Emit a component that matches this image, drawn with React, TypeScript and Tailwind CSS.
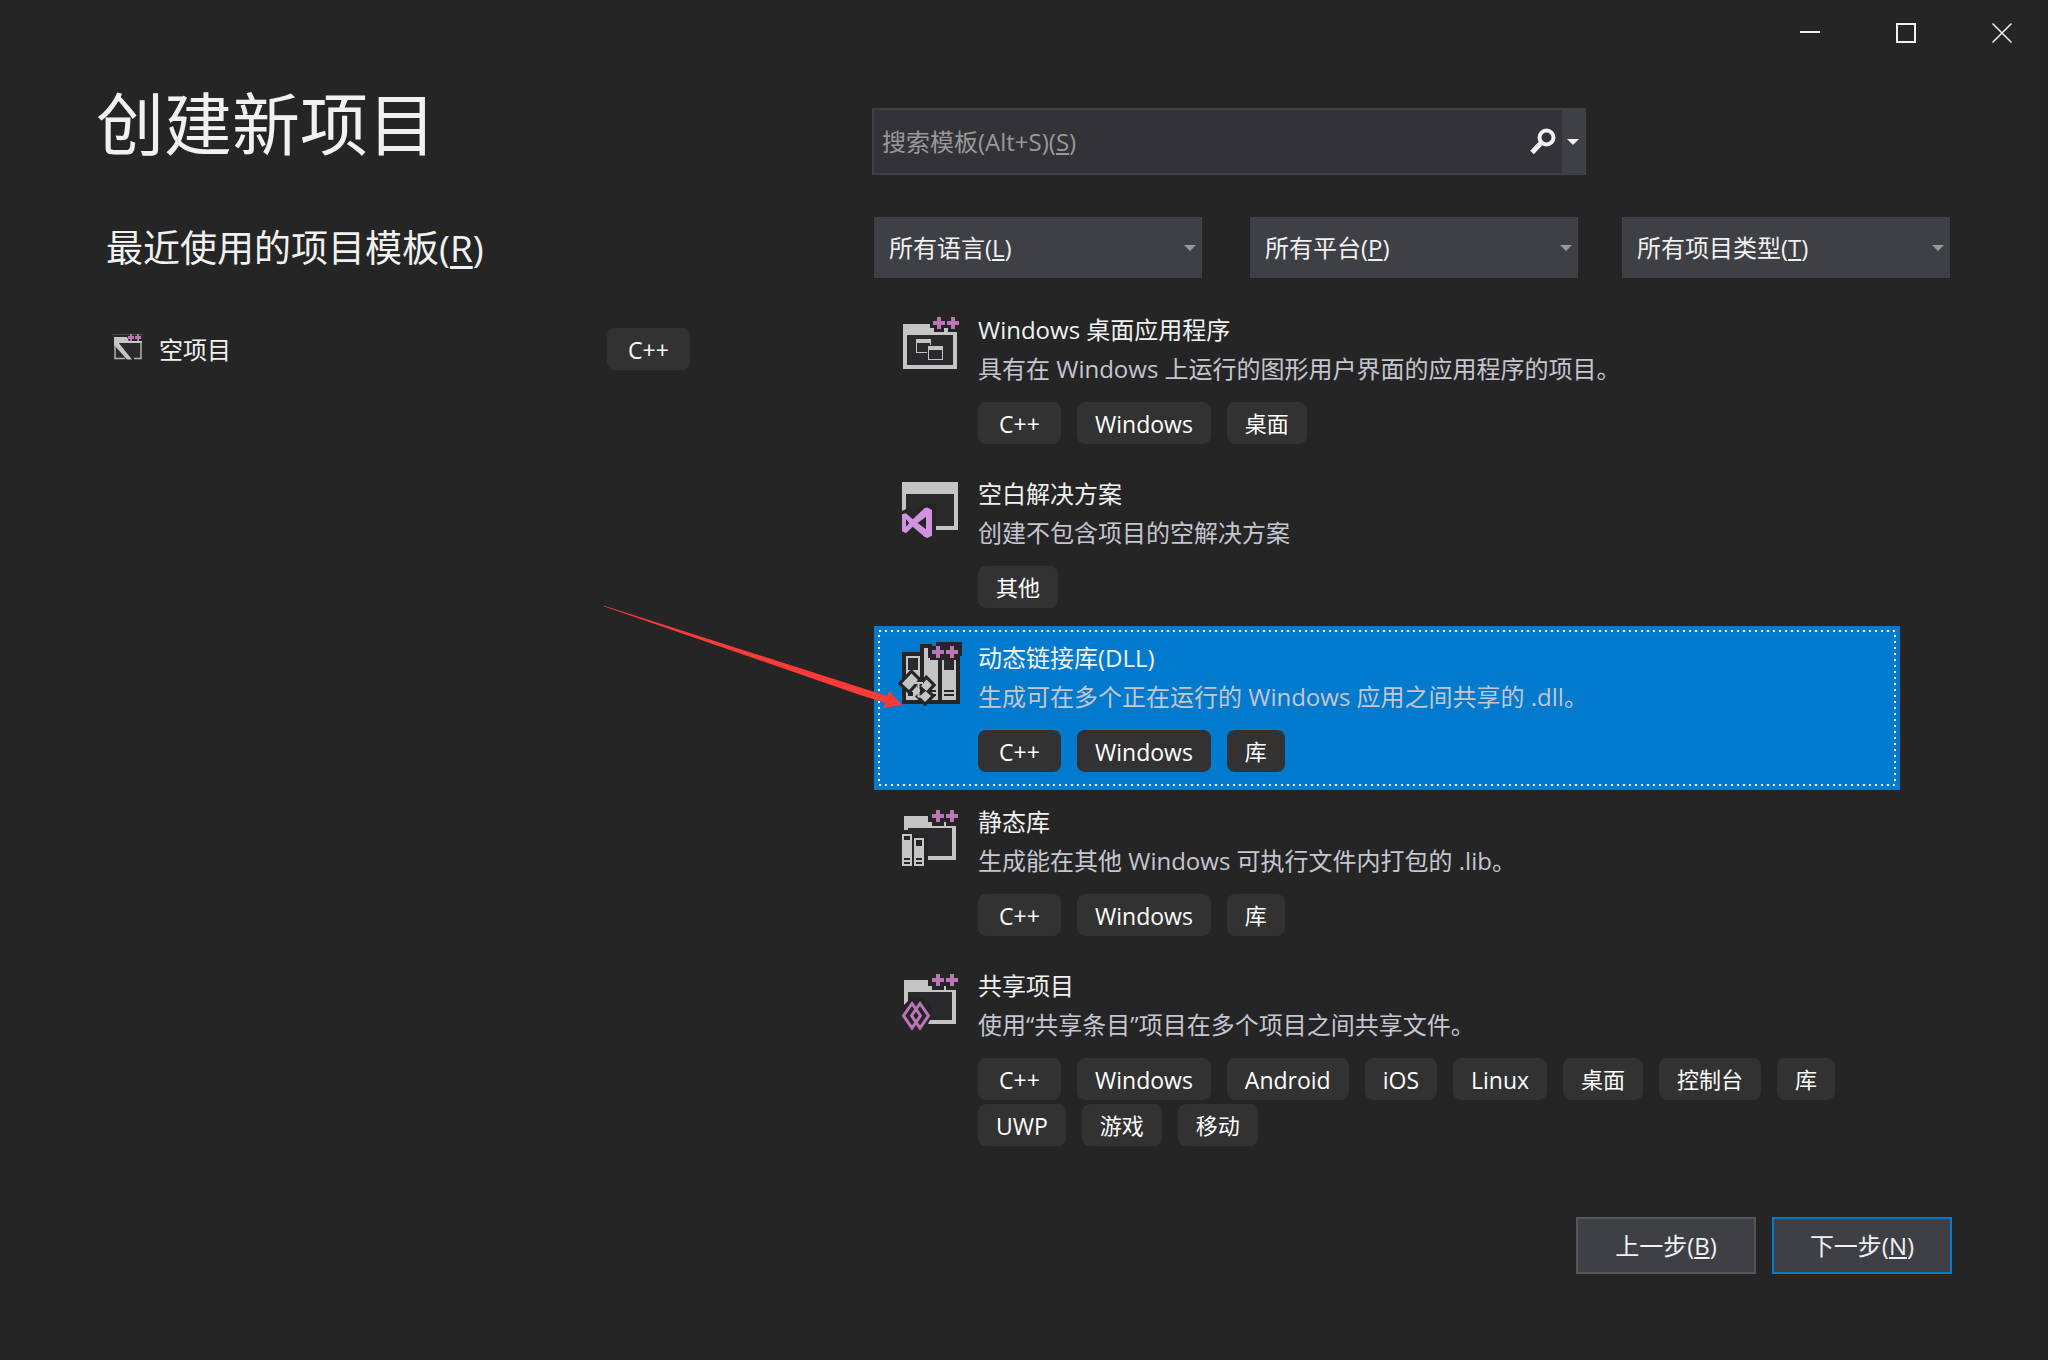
import { useState } from 'react';
import type { ReactNode } from 'react';
import clsx from 'clsx';

interface Template {
  id: string;
  title: string;
  description: string;
  tags: string[];
  icon: ReactNode;
}

interface FilterProps {
  id: string;
  text: string;
  accessKey: string;
  options: string[];
  className?: string;
}

function PlusPlus({ x, y }: { x: number; y: number }) {
  return (
    <g fill="#bb76b8">
      <path d={`M${x + 4} ${y}h4v4h4v4h-4v4h-4v-4h-4v-4h4z`} />
      <path d={`M${x + 18} ${y}h4v4h4v4h-4v4h-4v-4h-4v-4h4z`} />
    </g>
  );
}

function DesktopAppIcon() {
  return (
    <svg viewBox="0 0 64 64" className="size-16" aria-hidden="true">
      <path fill="#c5c5c5" d="M5 10h27v4h4v4h10v-4h4v4h9v37H5z" />
      <path fill="#2a2a2d" d="M9 21h46v30H9z" />
      <path fill="#c5c5c5" d="M18 25h15v14H18z" />
      <path fill="#2a2a2d" d="M19 29h13v9H19z" />
      <path fill="#2a2a2d" d="M29 31h17v16H29z" />
      <path fill="#c5c5c5" d="M30 32h15v14H30z" />
      <path fill="#2a2a2d" d="M31 36h13v9H31z" />
      <PlusPlus x={35} y={3} />
    </svg>
  );
}

function BlankSolutionIcon() {
  return (
    <svg viewBox="0 0 64 64" className="size-16" aria-hidden="true">
      <path fill="#2a2a2d" d="M8 16h48v32H38V26L28 25 16 35 8 31z" />
      <path fill="#c5c5c5" d="M4 4h56v48H38v-4h18V16H8v15l-4 2z" />
      <path
        fill="#d292e0"
        fillRule="evenodd"
        d="M4 36.3l4-1 6.7 6L26.7 30l2.6-.5L34 32v25.700l-4.700 2.300-2.600-1L14.700 48.700 8 55.300l-4-2zM8 41.300v7.400l3.300-3.700zM28 38.700v12.600L19.700 45z"
      />
    </svg>
  );
}

function DllIcon() {
  return (
    <svg viewBox="0 0 64 64" className="size-16" aria-hidden="true">
      <path fill="#252526" d="M4 10h18V2h12v2h4V0h26v14h-2v48H4z" />
      <path fill="#c5c5c5" d="M8 14h14v44H8zM26 6h14v52H26zM44 18h14v40H44z" />
      <path fill="#2a2a2d" d="M10 16h10v12H10zM46 18h10v10H46z" />
      <path fill="#252526" d="M30 6h12v12H32v-2h-2zM42 6h4v12h-4z" />
      <path fill="#252526" d="M46 48h10v2H46zM46 52h10v2H46zM32 48h6v2h-6zM32 52h6v2h-6zM10 50h5v4h-5z" />
      <g fill="#252526" stroke="#252526" strokeWidth="7">
        <path d="M4.500 41.500L13.500 32l6 6-8.500 9.500z" />
        <path d="M28.500 38l5 5-5 5.500-5-4z" />
        <path d="M27.500 49.500l5 4.500-5.500 5.500-5-5z" />
      </g>
      <g fill="#c5c5c5">
        <path d="M4 41.500L13.500 31.500l6.500 6.500-9 10z" />
        <path d="M28.500 37.500l5.500 5.500-5.500 6-5.500-5z" />
        <path d="M27.500 49l5.500 5-6 6-5.500-5.500z" />
      </g>
      <path d="M16 41h9M20.500 41v13.500H24" fill="none" stroke="#c5c5c5" strokeWidth="2" />
      <PlusPlus x={34} y={4} />
    </svg>
  );
}

function StaticLibIcon() {
  return (
    <svg viewBox="0 0 64 64" className="size-16" aria-hidden="true">
      <path fill="#2a2a2d" d="M10 22h44v28H30V28H10z" />
      <path fill="#c5c5c5" d="M6 10h24v6h4v4h12v-4h2v4h10v34H30v-4h24V22H10v2H6z" />
      <path fill="#c5c5c5" d="M4 28h10v32H4zM16 32h10v28H16z" />
      <path
        fill="#252526"
        d="M6 30h6v4H6zM18 34h6v6h-6zM6 52h6v2H6zM6 56h6v2H6zM18 52h6v2h-6zM18 56h6v2h-6z"
      />
      <PlusPlus x={34} y={4} />
    </svg>
  );
}

function SharedProjectIcon() {
  return (
    <svg viewBox="0 0 64 64" className="size-16" aria-hidden="true">
      <path fill="#2a2a2d" d="M10 22h44v28H34V38l-8-9H12l-2 3z" />
      <path fill="#c5c5c5" d="M6 10h24v6h4v4h12v-4h2v4h10v34H30v-4h24V22H10v12l-4 3z" />
      <path fill="#252526" d="M13 28h12l10 16-6 12H18L4 46V37z" />
      <g fill="none" stroke="#bb76b8" strokeWidth="3">
        <path d="M14 33.500L5.500 45.700 14 58l8.500-12.300z" />
        <path d="M22 33.500l-8.500 12.200L22 58l8.500-12.300z" />
      </g>
      <PlusPlus x={34} y={4} />
    </svg>
  );
}

function EmptyProjectIcon() {
  return (
    <svg viewBox="0 0 32 32" className="size-8" aria-hidden="true">
      <path stroke="#4a4a4a" d="M0 1.500h31" />
      <path fill="#2a2a2d" d="M3 9h26v16H3z" />
      <path fill="#c5c5c5" d="M2 4h13l2 4h13v2H2z" />
      <path fill="none" stroke="#b0b0b0" strokeWidth="1.500" d="M3 9v16.500h10M22 25.500h7V9" />
      <path fill="#c5c5c5" d="M2 9h4l14 17.500h-5L2 12z" />
      <path fill="#252526" d="M15 2h15v6H17z" />
      <path fill="#bb76b8" d="M18 1h2v2h2v3h-2v2h-2V6h-2V3h2zM25 1h2v2h2v3h-2v2h-2V6h-2V3h2z" />
    </svg>
  );
}

const templates: Template[] = [
  {
    id: 'desktop',
    title: 'Windows 桌面应用程序',
    description: '具有在 Windows 上运行的图形用户界面的应用程序的项目。',
    tags: ['C++', 'Windows', '桌面'],
    icon: <DesktopAppIcon />,
  },
  {
    id: 'blank',
    title: '空白解决方案',
    description: '创建不包含项目的空解决方案',
    tags: ['其他'],
    icon: <BlankSolutionIcon />,
  },
  {
    id: 'dll',
    title: '动态链接库(DLL)',
    description: '生成可在多个正在运行的 Windows 应用之间共享的 .dll。',
    tags: ['C++', 'Windows', '库'],
    icon: <DllIcon />,
  },
  {
    id: 'lib',
    title: '静态库',
    description: '生成能在其他 Windows 可执行文件内打包的 .lib。',
    tags: ['C++', 'Windows', '库'],
    icon: <StaticLibIcon />,
  },
  {
    id: 'shared',
    title: '共享项目',
    description: '使用“共享条目”项目在多个项目之间共享文件。',
    tags: ['C++', 'Windows', 'Android', 'iOS', 'Linux', '桌面', '控制台', '库', 'UWP', '游戏', '移动'],
    icon: <SharedProjectIcon />,
  },
];

function Tag({ label }: { label: string }) {
  // Latin labels are set slightly larger to balance with the Chinese ones
  const latin = /^[A-Za-z+]+$/.test(label);
  return (
    <span
      className={clsx(
        'flex h-[42px] items-center justify-center rounded-lg bg-[#323233] px-[18px] pt-[2px] text-white',
        latin ? 'text-[23px]' : 'text-[22px]',
        label === 'C++' && 'min-w-[83px]',
      )}
    >
      {label}
    </span>
  );
}

function Filter({ id, text, accessKey, options, className }: FilterProps) {
  return (
    <div className={clsx('relative h-[61px] flex-1 bg-[#3f3f46]', className)}>
      <select id={id} className="size-full appearance-none bg-transparent px-4 text-transparent outline-none">
        {options.map((option) => (
          <option key={option} className="bg-[#3f3f46] text-white">{option}</option>
        ))}
      </select>
      <label htmlFor={id} className="pointer-events-none absolute inset-0 flex items-center justify-between pr-[6px] pl-[15px]">
        <span>{text}(<u className="underline-offset-2">{accessKey}</u>)</span>
        <svg viewBox="0 0 12 6" className="h-[6px] w-3" aria-hidden="true">
          <path fill="#999999" d="M0 0h12L6 6z" />
        </svg>
      </label>
    </div>
  );
}

export default function App() {
  const [selected, setSelected] = useState('dll');
  const [query, setQuery] = useState('');

  return (
    <div className="relative min-h-screen bg-[#252526] pb-[86px] font-['Open_Sans','Noto_Sans_CJK_SC',sans-serif] text-2xl text-[#f1f1f1]">
      {/* Window buttons */}
      <header className="flex h-[66px] justify-end gap-1">
        <button aria-label="最小化" className="flex w-[92px] items-center justify-center">
          <svg viewBox="0 0 20 20" className="size-5" aria-hidden="true">
            <path fill="#f1f1f1" d="M0 8h20v2H0z" />
          </svg>
        </button>
        <button aria-label="最大化" className="flex w-[92px] items-center justify-center">
          <svg viewBox="0 0 20 20" className="size-5" aria-hidden="true">
            <path fill="none" stroke="#f1f1f1" strokeWidth="2" d="M1 1h18v18H1z" />
          </svg>
        </button>
        <button aria-label="关闭" className="flex w-[92px] items-center justify-center">
          <svg viewBox="0 0 20 20" className="size-5" aria-hidden="true">
            <path fill="none" stroke="#f1f1f1" strokeWidth="1.500" d="M.5.5l19 19M19.500.5l-19 19" />
          </svg>
        </button>
      </header>

      <main className="grid grid-cols-[minmax(0,872fr)_minmax(0,1176fr)]">
        {/* Recent templates */}
        <section className="pl-24">
          <h1 className="mt-[14px] text-[68px] leading-[88px]">创建新项目</h1>
          <h2 className="mt-14 pl-[10px] text-[37px] leading-[48px]">
            最近使用的项目模板(<u className="underline-offset-4">R</u>)
          </h2>
          <div className="mt-14 mr-[182px] flex h-[42px] items-center pl-4">
            <EmptyProjectIcon />
            <span className="ml-[15px] flex-1 pt-[2px]">空项目</span>
            <Tag label="C++" />
          </div>
        </section>

        <section className="pt-[42px] pr-24">
          {/* Search */}
          <div className="flex h-[67px] w-[714px] max-w-full items-stretch border-2 border-[#3f3f46] bg-[#333337]">
            <div className="relative flex-1">
              <input
                id="search"
                type="text"
                placeholder=" "
                value={query}
                onChange={(e) => setQuery(e.target.value)}
                className="peer size-full bg-transparent px-2 outline-none"
              />
              <label
                htmlFor="search"
                className="pointer-events-none absolute inset-0 hidden items-center px-2 text-[#999999] peer-placeholder-shown:flex"
              >
                <span>搜索模板(Alt+S)(<u className="underline-offset-2">S</u>)</span>
              </label>
            </div>
            <button aria-label="搜索" className="flex w-10 items-center justify-center">
              <svg viewBox="0 0 28 28" className="size-7" aria-hidden="true">
                <circle cx="18.500" cy="9.500" r="7" fill="none" stroke="#f1f1f1" strokeWidth="4" />
                <path stroke="#f1f1f1" strokeWidth="5" d="M13.500 14.500L4 24.500" />
              </svg>
            </button>
            <button aria-label="搜索选项" className="flex w-[22px] items-center justify-center bg-[#3f3f46]">
              <svg viewBox="0 0 12 6" className="h-[6px] w-3" aria-hidden="true">
                <path fill="#f1f1f1" d="M0 0h12L6 6z" />
              </svg>
            </button>
          </div>

          {/* Filters */}
          <div className="mt-[42px] mr-[2px] ml-[2px] flex gap-11">
            <Filter id="language" text="所有语言" accessKey="L" options={['所有语言', 'C++']} />
            <Filter id="platform" text="所有平台" accessKey="P" options={['所有平台', 'Windows']} className="ml-1" />
            <Filter id="type" text="所有项目类型" accessKey="T" options={['所有项目类型', '桌面', '库']} />
          </div>

          {/* Template list */}
          <ul role="listbox" aria-label="项目模板" className="mt-5 mr-[52px] ml-[2px]">
            {templates.map((template) => {
              const active = template.id === selected;
              return (
                <li
                  key={template.id}
                  role="option"
                  aria-selected={active}
                  onClick={() => setSelected(template.id)}
                  className={clsx('relative flex gap-4 pt-4 pr-[52px] pb-[18px] pl-6', active && 'bg-[#007acc]')}
                >
                  {active && (
                    <svg className="pointer-events-none absolute inset-1 h-[calc(100%-8px)] w-[calc(100%-8px)]" aria-hidden="true">
                      <rect
                        x="1"
                        y="1"
                        className="h-[calc(100%-2px)] w-[calc(100%-2px)]"
                        fill="none"
                        stroke="#ffffff"
                        strokeWidth="2"
                        strokeDasharray="2 4"
                      />
                    </svg>
                  )}
                  <div className="shrink-0">{template.icon}</div>
                  <div className="min-w-0 flex-1">
                    <h3 className="leading-8">{template.title}</h3>
                    <p className="mt-[7px] leading-8 text-[#c6c6d0]">{template.description}</p>
                    <div className="mt-[17px] flex flex-wrap gap-x-4 gap-y-1">
                      {template.tags.map((tag) => (
                        <Tag key={tag} label={tag} />
                      ))}
                    </div>
                  </div>
                </li>
              );
            })}
          </ul>

          <div className="mt-[53px] flex justify-end gap-4">
            <button className="h-[57px] w-[180px] border-2 border-[#555555] bg-[#3f3f46]">
              上一步(<u className="underline-offset-2">B</u>)
            </button>
            <button className="h-[57px] w-[180px] border-2 border-[#007acc] bg-[#3f3f46]">
              下一步(<u className="underline-offset-2">N</u>)
            </button>
          </div>
        </section>
      </main>

      {/* Arrow pointing at the DLL template */}
      <svg viewBox="0 0 300 104" className="pointer-events-none absolute top-[605px] left-[603px] h-[104px] w-[300px]" aria-hidden="true">
        <path fill="#fe3b38" d="M0 1L2 1 284 91 286 86 299 100 280 103 283 98 257 90z" />
      </svg>
    </div>
  );
}
